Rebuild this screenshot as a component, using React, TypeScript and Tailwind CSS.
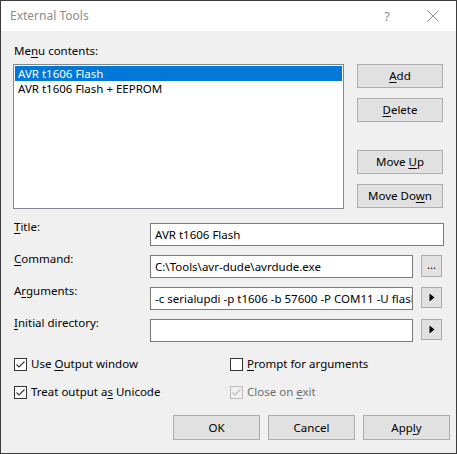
import type { ReactNode } from "react";

const font = { fontFamily: '"Noto Sans", "Segoe UI", sans-serif' };

function U({ children }: { children: ReactNode }) {
  return <span className="underline underline-offset-[2px]">{children}</span>;
}

function Btn({ children, className = "" }: { children: ReactNode; className?: string }) {
  return (
    <div
      className={`flex items-center justify-center border border-[#adadad] bg-[#e1e1e1] text-[11.5px] leading-[16px] text-black ${className}`}
    >
      {children}
    </div>
  );
}

function Field({ children, className = "" }: { children?: ReactNode; className?: string }) {
  return (
    <div
      className={`flex h-[23px] items-center overflow-hidden whitespace-nowrap border border-[#7a7a7a] bg-white px-[4px] text-[11.5px] leading-[16px] text-black ${className}`}
    >
      {children}
    </div>
  );
}

function Check({ checked, disabled }: { checked: boolean; disabled?: boolean }) {
  const c = disabled ? "#bcbcbc" : "#333333";
  return (
    <svg width="13" height="13" viewBox="0 0 13 13" className="shrink-0">
      <rect x="0.5" y="0.5" width="12" height="12" fill={disabled ? "#f0f0f0" : "#ffffff"} stroke={c} />
      {checked && <path d="M2.5 6.5 L5 9 L10.5 3.5" fill="none" stroke={c} strokeWidth="1.1" />}
    </svg>
  );
}

function Arrow() {
  return (
    <svg width="6" height="9" viewBox="0 0 6 9">
      <path d="M0.5 0.5 L5.5 4.5 L0.5 8.5 Z" fill="#000" />
    </svg>
  );
}

export default function App() {
  return (
    <div style={font} className="h-[454px] w-[457px] border border-[#3c3c3c] bg-[#f0f0f0] text-[11.5px] leading-[16px] text-black">
      {/* title bar */}
      <div className="flex h-[30px] items-center bg-white pl-[9px] pr-[17px] text-[#8c8c8c]">
        <span className="flex-1 text-[12px]">External Tools</span>
        <span className="mr-[37px] text-[13px]">?</span>
        <svg width="12" height="12" viewBox="0 0 12 12">
          <path d="M0.5 0.5 L11.5 11.5 M11.5 0.5 L0.5 11.5" stroke="#8c8c8c" strokeWidth="1" />
        </svg>
      </div>

      <div className="flex flex-col px-[12px] pt-[12px]">
        <div className="pl-[1px]">
          Me<U>n</U>u contents:
        </div>

        <div className="mt-[5px] flex gap-[13px]">
          <div className="flex h-[145px] w-[331px] flex-col border border-[#828790] bg-white p-[1px]">
            <div className="h-[15px] overflow-hidden bg-[#0078d7] pl-[3px] leading-[15px] text-white">AVR t1606 Flash</div>
            <div className="h-[15px] overflow-hidden pl-[3px] leading-[15px]">AVR t1606 Flash + EEPROM</div>
          </div>
          <div className="flex w-[86px] flex-col">
            <Btn className="h-[24px]">
              <span>
                <U>A</U>dd
              </span>
            </Btn>
            <Btn className="mt-[10px] h-[24px]">
              <span>
                <U>D</U>elete
              </span>
            </Btn>
            <Btn className="mt-[28px] h-[24px]">
              <span>
                Move <U>U</U>p
              </span>
            </Btn>
            <Btn className="mt-[10px] h-[24px]">
              <span>
                Move Do<U>w</U>n
              </span>
            </Btn>
          </div>
        </div>

        <div className="mt-[14px] flex flex-col gap-[9px]">
          <div className="flex items-start">
            <div className="-mt-[4px] w-[137px] pl-[1px]">
              <U>T</U>itle:
            </div>
            <Field className="w-[294px]">AVR t1606 Flash</Field>
          </div>
          <div className="flex items-start">
            <div className="-mt-[4px] w-[137px] pl-[1px]">
              <U>C</U>ommand:
            </div>
            <Field className="w-[263px]">C:\Tools\avr-dude\avrdude.exe</Field>
            <Btn className="ml-[8px] h-[22px] w-[21px]">
              <span className="-mt-[3px]">...</span>
            </Btn>
          </div>
          <div className="flex items-start">
            <div className="-mt-[4px] w-[137px] pl-[1px]">
              A<U>r</U>guments:
            </div>
            <Field className="w-[263px]">-c serialupdi -p t1606 -b 57600 -P COM11 -U flash:w:$(TargetDir)$(TargetName).hex:i</Field>
            <Btn className="ml-[8px] h-[21px] w-[21px]">
              <Arrow />
            </Btn>
          </div>
          <div className="flex items-start">
            <div className="-mt-[4px] w-[137px] pl-[1px]">
              <U>I</U>nitial directory:
            </div>
            <Field className="w-[263px]" />
            <Btn className="ml-[8px] h-[21px] w-[21px]">
              <Arrow />
            </Btn>
          </div>
        </div>

        <div className="mt-[14px] grid grid-cols-[216px_1fr] gap-y-[12px] pl-[1px]">
          <div className="flex items-center gap-[4px]">
            <Check checked />
            <span>
              Use <U>O</U>utput window
            </span>
          </div>
          <div className="flex items-center gap-[4px]">
            <Check checked={false} />
            <span>
              <U>P</U>rompt for arguments
            </span>
          </div>
          <div className="flex items-center gap-[4px]">
            <Check checked />
            <span>
              Treat output a<U>s</U> Unicode
            </span>
          </div>
          <div className="flex items-center gap-[4px] text-[#6d6d6d]">
            <Check checked disabled />
            <span>
              Close on <U>e</U>xit
            </span>
          </div>
        </div>

        <div className="mt-[15px] flex justify-end gap-[8px]">
          <Btn className="h-[25px] w-[87px]">OK</Btn>
          <Btn className="h-[25px] w-[87px]">Cancel</Btn>
          <Btn className="-mr-[6px] h-[25px] w-[87px]">
            <span>
              App<U>l</U>y
            </span>
          </Btn>
        </div>
      </div>
    </div>
  );
}
